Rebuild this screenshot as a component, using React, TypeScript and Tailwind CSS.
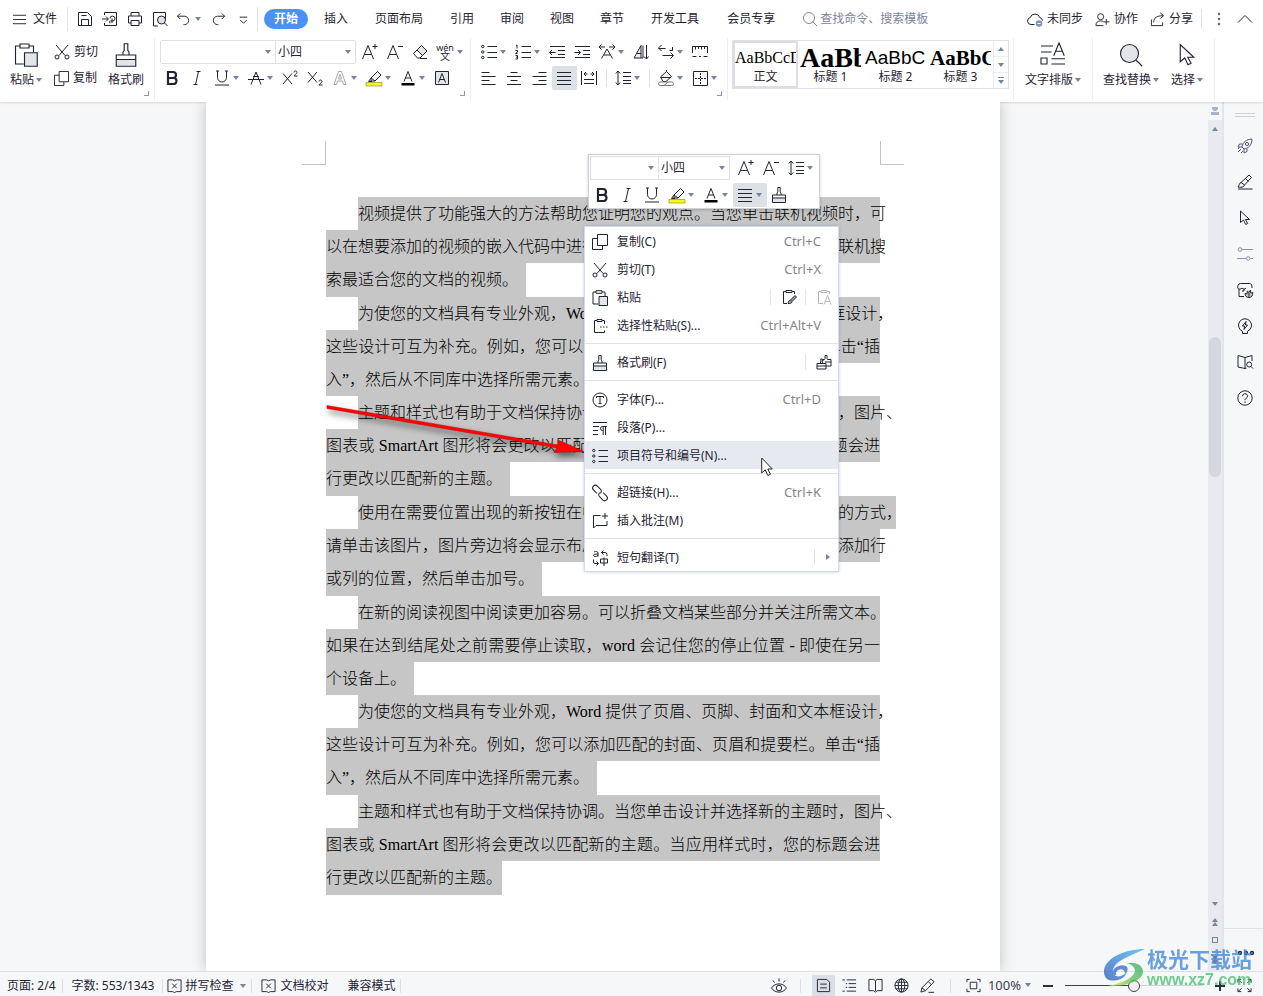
import { useState, type ReactNode } from "react";
import clsx from "clsx";

const tabs = ["插入", "页面布局", "引用", "审阅", "视图", "章节", "开发工具", "会员专享"];

type Line = { text: string; full?: boolean; indent?: boolean; hang?: boolean; last?: boolean };

const paragraphs: Line[][] = [
  [
    { text: "视频提供了功能强大的方法帮助您证明您的观点。当您单击联机视频时，可", full: true, indent: true },
    { text: "以在想要添加的视频的嵌入代码中进行粘贴。您也可以键入一个关键字以联机搜", full: true },
    { text: "索最适合您的文档的视频。" },
  ],
  [
    { text: "为使您的文档具有专业外观，Word 提供了页眉、页脚、封面和文本框设计，", full: true, indent: true },
    { text: "这些设计可互为补充。例如，您可以添加匹配的封面、页眉和提要栏。单击“插", full: true },
    { text: "入”，然后从不同库中选择所需元素。" },
  ],
  [
    { text: "主题和样式也有助于文档保持协调。当您单击设计并选择新的主题时，图片、", full: true, indent: true },
    { text: "图表或 SmartArt 图形将会更改以匹配新的主题。当应用样式时，您的标题会进", full: true },
    { text: "行更改以匹配新的主题。" },
  ],
  [
    { text: "使用在需要位置出现的新按钮在中保存时间。若要更改图片适应文档的方式，", full: true, indent: true, hang: true },
    { text: "请单击该图片，图片旁边将会显示布局选项按钮。当处理表格时，单击要添加行", full: true },
    { text: "或列的位置，然后单击加号。" },
  ],
  [
    { text: "在新的阅读视图中阅读更加容易。可以折叠文档某些部分并关注所需文本。", full: true, indent: true },
    { text: "如果在达到结尾处之前需要停止读取，word 会记住您的停止位置 - 即使在另一", full: true },
    { text: "个设备上。" },
  ],
  [
    { text: "为使您的文档具有专业外观，Word 提供了页眉、页脚、封面和文本框设计，", full: true, indent: true },
    { text: "这些设计可互为补充。例如，您可以添加匹配的封面、页眉和提要栏。单击“插", full: true },
    { text: "入”，然后从不同库中选择所需元素。" },
  ],
  [
    { text: "主题和样式也有助于文档保持协调。当您单击设计并选择新的主题时，图片、", full: true, indent: true },
    { text: "图表或 SmartArt 图形将会更改以匹配新的主题。当应用样式时，您的标题会进", full: true },
    { text: "行更改以匹配新的主题。", last: true },
  ],
];

const icons = {
  menu: <path d="M1 3.5h14M1 8h14M1 12.5h14" />,
  save: <path d="M1.500 1.500h9l4 4v9h-13zM4.500 14.500v-6h7v6M4.500 4.500h5" />,
  exportPdf: <path d="M2.500 4V1.500h12v13h-12V12M0 8h6M4 5.500 6.500 8 4 10.500M8.500 12c-1.500 0-1.500-2 0-2h1.500a2.500 2.500 0 1 0-2-2.500M10 7.500V12" />,
  print: <path d="M4 5V1.500h8V5M4 12H1.500V5h13v7H12M4 9.500h8v5H4z" />,
  preview: (
    <>
      <path d="M6 15H1.500V1.500h12V8" />
      <circle cx="9.500" cy="9" r="4" fill="#dfe2e6" />
      <path d="m12.500 12 3 3" />
    </>
  ),
  undo: <path d="M4.500 1.500 1.500 4.500l3 3M1.500 4.500h7.500a4.500 4.500 0 0 1 0 9H8" />,
  redo: <path d="m11.500 1.500 3 3-3 3M14.500 4.500H7a4.500 4.500 0 0 0 0 9h1" />,
  more: <path d="M4 5.500h8M4.500 8.500 8 12l3.500-3.500" />,
  scissors: (
    <>
      <path d="m2 1 9 10.500M14 1 5 11.500" />
      <circle cx="3" cy="13" r="2" />
      <circle cx="13" cy="13" r="2" />
    </>
  ),
  copy: <path d="M5.500.5h10v11h-10zM5.500 4.500h-5v11h10v-4" />,
  paste: (
    <>
      <path d="M4 2H1v12h5.500M10 2h3v4M4 .7h6V3.300H4z" />
      <path d="M7 6.500h8.500v9H7z" fill="#e2e4e8" />
    </>
  ),
  pasteSpecial: (
    <>
      <path d="M5 2.500H2.500v12h10v-2M10 2.500h2.500V6M5 1.500h5v2H5z" />
      <path d="M8 9h7.500" strokeDasharray="1.500 1.500" />
    </>
  ),
  pasteBrush: (
    <>
      <path d="M5 2.500H2.500v12H6M11 2.500h2.500V5M5 1.500h6v2H5z" />
      <path d="m14 6.500 1.500 1.500-4.500 4.500L9 11.500z" fill="#9aa0ac" />
      <path d="M9 11.500c-1.500 0-2 2-2 3 1.500.3 4 0 4-2" fill="#9aa0ac" />
    </>
  ),
  pasteText: <path d="M5 2.500H2.500v12H7M11 2.500h2.500V5M5 1.500h6v2H5zM8 15.500l3.500-9 3.500 9M9.500 12.500h4" />,
  brush: (
    <>
      <path d="M2 10.500h12V15H2z" fill="#e2e4e8" stroke="none" />
      <path d="M1.500 8h13v7.500h-13zM1.500 11h13M6 8V6l.8-1V.5h2.400V5l.8 1v2" />
    </>
  ),
  brushes: <path d="M1 9.500h9V15H1zM1 12h9M4 9.500 4.800 8V5h1.500v3l1 1.500M7 7V5.500h1.500l.5-1V1.500h2v3l.5 1H15V12h-5M9 8h6" />,
  growA: <path d="M.5 15 6 1.500 11.500 15M2.500 10.500h7M13 0v5M10.500 2.500h5" />,
  shrinkA: <path d="M.5 15 6 1.500 11.500 15M2.500 10.500h7M11 2.500h5" />,
  eraser: (
    <>
      <path d="m6 6.500 4.500-4.500 4.500 4.500-4.500 4.500z" fill="#e2e4e8" stroke="none" />
      <path d="m1.500 9.500 8-8 5.500 5.500-7 7H5.500zM5 6l5.500 5.500M8 14.500h7" />
    </>
  ),
  bold: <path d="M4 2h5a2.800 2.800 0 0 1 0 6H4zM4 8h5.500a3 3 0 0 1 0 6H4z" strokeWidth="2.200" />,
  italic: <path d="M7.500 1.500h4M4.500 14.500h4M9.500 1.500l-3 13" />,
  underline: <path d="M3.500 1v6.500a4.500 4.500 0 0 0 9 0V1M1 15h14M2 1h3M11 1h3" />,
  strike: <path d="M3 14.500 8 2l5 12.500M0 9.500h16M5 6.500h6" />,
  superscript: <path d="m1 3.500 9 10.500M10 3.500 1 14M12 2.500c0-2 3-2 3 0 0 1.200-3 2.500-3 3.500h3.500" />,
  subscript: <path d="m1 2 9 10.500M10 2 1 12.500M12 11.500c0-2 3-2 3 0 0 1.200-3 2.500-3 3.500h3.500" />,
  outlineA: <path d="M2 14.500 6.500 1.500h3l4.500 13h-2.500l-1-3.500h-5l-1 3.500zM6.300 9h3.400L8 4z" stroke="#a2a6ae" />,
  highlight: (
    <>
      <path d="M0 12.500h16v3.500H0z" fill="#ffff00" stroke="#8c8f40" strokeWidth="0.700" />
      <path d="m5 8 6.500-6.500L15 5l-6 6H5zM5 8l4 3M5 8l-2.500 3.500H6" fill="#f3f4f6" />
    </>
  ),
  fontColor: (
    <>
      <path d="M1.500 13h13v2.500h-13z" fill="#000" stroke="none" />
      <path d="M4 11.500 8 1.500l4 10M5.300 8h5.400" />
    </>
  ),
  boxA: (
    <>
      <path d="M1.500 1.500h13v13h-13z" fill="#e2e4e8" />
      <path d="M4.500 12.500 8 3.500l3.500 9M5.800 9.500h4.400" />
    </>
  ),
  bullets: (
    <>
      <circle cx="1.800" cy="2.500" r="1.200" />
      <circle cx="1.800" cy="8" r="1.200" />
      <circle cx="1.800" cy="13.500" r="1.200" />
      <path d="M6.500 2.500H16M6.500 8.500H16M6.500 13.500H16" />
    </>
  ),
  numbers: <path d="M1 1.500 2 1v3.500M.5 6.500h2V8l-2 1.500h2M.5 11.500h2V15h-2M1 13.200h1.500M6.500 2.500H16M6.500 8.500H16M6.500 13.500H16" />,
  outdent: <path d="M1 2.500h15M9 6.500h7M9 10.500h7M1 13.500h15M6.500 8.500H.5M3 6 .5 8.500 3 11" />,
  indent: <path d="M1 2.500h15M9 6.500h7M9 10.500h7M1 13.500h15M.5 8.500h6M4 6l2.500 2.500L4 11" />,
  charScale: <path d="M0 3h6M2.500.5 0 3l2.500 2.500M16 3h-6M13.500.5 16 3l-2.500 2.500M2.500 14.500 8 5l5.500 9.500M5 11h6" />,
  sortText: (
    <>
      <path d="M1 14 8 1.500V14z" fill="#eceef1" />
      <path d="M4 9.500h4M10 1.500V14H8M13.500 1v14M11 12.500l2.500 2.500 2-2.500" />
    </>
  ),
  wrap: <path d="M3.500 1 .5 4l3 3M.5 4.500h7M12.500 8.500l3 3-3 3M15 11.500H4.500M14.500 3v3.500h-3" />,
  ruler: <path d="M.5 9V2.500h15V9M3.500 2.500v3M6.500 2.500V5M9.500 2.500v3M12.500 2.500V5M.5 12.500h4M7 12.500h2M11.500 12.500h4" />,
  alignLeft: <path d="M.5 2.500h8M.5 6.500h14M.5 10.500h8M.5 14.500h14" />,
  alignCenter: <path d="M4.500 2.500h7M1 6.500h14M4.500 10.500h7M1 14.500h14" />,
  alignRight: <path d="M7.500 2.500h8M1.500 6.500h14M7.500 10.500h8M1.500 14.500h14" />,
  justify: <path d="M1 2.500h14M1 6.500h14M1 10.500h14M1 14.500h14" />,
  distribute: <path d="M.5 1v14M15.500 1v14M3 9.500h10M3 13.500h10M3 4h3.500M5 2 3 4l2 2M13 4H9.500M11 2l2 2-2 2" />,
  lineSpacing: <path d="M3 1v14M.8 3.500 3 1l2.200 2.500M.8 12.500 3 15l2.200-2.500M8 2.500h8M8 6.500h8M8 10.500h8M8 13.500h8" />,
  fill: (
    <>
      <path d="m2.500 7 6-5.500 5 5-5.500 5H5zM8.500 1.500V0" fill="#f3f4f6" />
      <path d="M3 7.500h10" />
      <rect x=".5" y="12" width="15" height="3.500" rx="1.700" stroke="#777" />
      <path d="m6 15.500 4-3.500" stroke="#e0503c" />
    </>
  ),
  borders: (
    <>
      <path d="M1.500 1.500h14v14h-14z" />
      <path d="M8.500 3v11M3 8.500h11" strokeDasharray="2 1" />
    </>
  ),
  typeset: <path d="M0 2h8M0 6h7M0 10h4v4H0zM7 10.500h9M7 14h9M8.500 8.500 12 0l3.500 8.500M10 5.500h4" />,
  search: (
    <>
      <circle cx="7" cy="7" r="5.500" />
      <path d="m11 11 4 4" />
    </>
  ),
  searchBig: (
    <>
      <circle cx="7" cy="7" r="6" fill="#e2e4e8" />
      <path d="m11.500 11.500 4 4" />
    </>
  ),
  cursor: <path d="M3.500 1v11.500l3-2.500 2.200 4.500 2-1L8.500 9.500h4z" />,
  cloud: (
    <>
      <path d="M7.500 13.500H4A3.500 3.500 0 0 1 3.200 6.600a5 5 0 0 1 9.600 0A3.500 3.500 0 0 1 15.500 9.500" />
      <circle cx="12" cy="12.500" r="3.300" fill="#8493b3" stroke="none" />
      <path d="M10.500 12.500h3" stroke="#fff" />
    </>
  ),
  invite: (
    <>
      <circle cx="6" cy="5" r="3.200" />
      <path d="M1 14.500c0-3.500 2-5 5-5 1.500 0 2.500.3 3.300 1M1 14.500h8M12 7.500v6M9.500 10.500h6" />
    </>
  ),
  share: <path d="M1.500 8v6.500h12V11M4 11c0-5 3-7 10-7M11 1l3.500 3L11 7" />,
  dots: (
    <g fill="#5b6270" stroke="none">
      <circle cx="8" cy="3" r="1.200" />
      <circle cx="8" cy="8" r="1.200" />
      <circle cx="8" cy="13" r="1.200" />
    </g>
  ),
  chevronUp: <path d="m1 11.500 7-7 7 7" />,
  fontT: (
    <>
      <circle cx="8" cy="8" r="7" />
      <path d="M4.500 6V4.500h7V6M8 4.500v7M6.500 11.500h3" />
    </>
  ),
  paragraph: <path d="M1 2.500h14M1 6.500h6M1 10.500h5M1 14.500h5M15 6.500h-4.500a2 2 0 0 0 0 4H11M11.200 6.500v8.500M13.500 6.500v8.500" />,
  link: (
    <g transform="rotate(45 8 8)">
      <path d="M6 10.500H1.200a2.700 2.700 0 0 1 0-5.500h4.600a2.700 2.700 0 0 1 2.600 3" />
      <path d="M10 5.500h4.800a2.700 2.700 0 0 1 0 5.500h-4.600a2.700 2.700 0 0 1-2.600-3" />
    </g>
  ),
  comment: <path d="M8.500 2.500h-7V15l2.500-2.500h11V8M13 0v6M10 3h6" />,
  translate: <path d="M2 2c2-1 4-.5 4 1v3.500M6 4C3 4 1.500 4.500 1.500 5.500s3 1.500 4.500 0M9.500 2.500H13a2 2 0 0 1 2 2V6M11.500.5l-2 2 2 2M1.500 9.500V12a1.500 1.500 0 0 0 1.500 1.500h3M4.500 11.500l2 2-2 2M8.500 9h7v4h-7zM12 7.500V16" />,
  rocket: (
    <g stroke="#4a5878">
      <path d="M5 9c1-5 4-7.500 10-8-.2 6-3 9-8 10zM5.500 6 2.500 6 1 9h4M10 10.500v3L7 15v-4M4 11l-3 3M2.500 9.500 1 11M6 13l-2 2" />
      <circle cx="10" cy="6" r="1.600" />
    </g>
  ),
  pen: <path d="M4 8.500 12 1l2.500 2.500L7.500 11zM4 8.500c-2 .5-1.500 3-3 4.500 2.500.5 6 .5 6.500-2M1 15h14.500M8.500 4.500l3 3" />,
  sliders: (
    <g stroke="#8a93a8">
      <circle cx="3" cy="3.500" r="1.800" />
      <path d="M5 3.500h11M0 12.500h9M13 12.500h3" />
      <circle cx="11.200" cy="12.500" r="1.800" />
    </g>
  ),
  shop: (
    <>
      <path d="M2 7v7.500h5M3.500 1.500h9C14.500 1.500 15 3 15 6M3.500 1.500C1 1.500.5 4.500.8 6c.5 1.500 3.200 1.500 4.200 0 1 1.500 3 1.500 4 0M6 10V8h2" />
      <path d="M12 15.500c-2.500 0-4-1.500-4-4l2 .5.3-3 1.700 1.500L13.500 8l.3 3 2-.5c0 3.500-1.300 5-3.800 5zM12 15V11" fill="#c5c9d2" />
    </>
  ),
  bulb: <path d="M5.500 15.500h5v-2.200a6.500 6.500 0 1 0-5 0zM9 3.500 5.500 8h2L7 11.500 10.500 7h-2z" />,
  bookSearch: (
    <>
      <path d="M8 3.500 1 1.500v11.500l7 1.500V3.500l7-2V7M8 14.500l1.500-.5" />
      <circle cx="12.200" cy="10.500" r="2.500" />
      <path d="m14 12.500 2 2" />
    </>
  ),
  help: (
    <>
      <circle cx="8" cy="8" r="7.200" />
      <path d="M5.500 6.200a2.500 2.500 0 1 1 3.600 2.200C8.200 8.900 8 9.300 8 10.200M8 11.500V13" />
    </>
  ),
  proof: <path d="M6 2H1v12.500h5l2 1 2-1h5V2h-5L8 3zM5.500 6l5 5M10.500 6l-5 5" />,
  eye: (
    <>
      <path d="M.5 10C4 4.500 12 4.500 15.500 10 12 15.500 4 15.500.5 10zM8 3.500V.5M3.500 4.500 2 2.500M12.500 4.500l1.500-2" />
      <circle cx="8" cy="10" r="2.700" />
    </>
  ),
  page: <path d="M1.500 1.500h10l3 3v10h-13zM4.500 6.500h7M4.500 10.500h7" />,
  outline: <path d="M.5 2H3M5 2h10M4 6h1.500M7 6h8M4 10h1.500M7 10h8M.5 14H3M5 14h10" />,
  book: <path d="M1 1.500h5l2 1.500 2-1.500h5v12h-5L8 15l-2-1.500H1zM8 3v11" />,
  globe: (
    <>
      <circle cx="8" cy="8" r="7" />
      <ellipse cx="8" cy="8" rx="3.500" ry="7" />
      <path d="M1 8h14M2 4.500h12M2 11.500h12M8 1v14" />
    </>
  ),
  pencil: <path d="m2 10.500 9.500-9.500L15 4l-9 9.500-5 1.500zM2 10.500l4 3M9 4l3.500 3.500M9 15.300h6" />,
  fit: <path d="M1 4.500V1.500h3M12 1.500h3v3M15 11.500v3h-3M4 14.500H1v-3M4.500 4.500h7v7h-7z" />,
  expand: <path d="M1 5V1.500h3.500M1 1.500 5 5M11.500 1.500H15V5M15 1.500 11 5M15 11v3.500h-3.500M15 14.500 11 11M4.500 14.500H1V11M1 14.500 5 11" />,
  ellipsis: (
    <g strokeWidth="1.500">
      <circle cx="2" cy="8" r="1.400" />
      <circle cx="8" cy="8" r="1.400" />
      <circle cx="14" cy="8" r="1.400" />
    </g>
  ),
};

type IconName = keyof typeof icons;

function Icon({ name, className = "size-4" }: { name: IconName; className?: string }) {
  return (
    <svg
      viewBox="0 0 16 16"
      fill="none"
      stroke="currentColor"
      strokeWidth="1"
      aria-hidden="true"
      className={clsx("shrink-0 overflow-visible", className)}
    >
      {icons[name]}
    </svg>
  );
}

function Caret({ className }: { className?: string }) {
  return (
    <svg viewBox="0 0 6 4" aria-hidden="true" className={clsx("w-[6px] h-1 shrink-0 fill-[#7784a0]", className)}>
      <path d="M0 0h6L3 4z" />
    </svg>
  );
}

function Tool({ name, label, caret, active }: { name: IconName; label: string; caret?: boolean; active?: boolean }) {
  return (
    <button
      type="button"
      aria-label={label}
      className={clsx(
        "h-6 flex items-center shrink-0 pl-1 rounded-xs",
        caret ? "w-[34px] gap-[3px]" : "w-[25px]",
        active && "bg-[#dce1e6]",
      )}
    >
      <Icon name={name} />
      {caret && <Caret />}
    </button>
  );
}

function Corner() {
  return <span className="absolute right-[5px] bottom-1 size-[5px] border-r border-b border-[#8c97b0]" />;
}

function Combo({ label, value, className }: { label: string; value: string; className: string }) {
  return (
    <span className={clsx("relative flex items-center", className)}>
      <select aria-label={label} defaultValue={value} className="appearance-none size-full pl-0.5 outline-none">
        <option value={value}>{value}</option>
      </select>
      <Caret className="absolute right-1" />
    </span>
  );
}

function TitleBar() {
  const quick: [IconName, string][] = [
    ["save", "保存"],
    ["exportPdf", "输出为PDF"],
    ["print", "打印"],
    ["preview", "打印预览"],
  ];
  return (
    <div className="h-[38px] flex items-center whitespace-nowrap">
      <button type="button" className="flex items-center gap-1.5 pl-3">
        <Icon name="menu" className="size-[15px]" />
        文件
      </button>
      <span className="w-px h-6 ml-2.5 mr-1 bg-[#e1e3e8]" />
      {quick.map(([name, label]) => (
        <button key={name} type="button" aria-label={label} className="w-[25px] flex justify-center">
          <Icon name={name} />
        </button>
      ))}
      <button type="button" aria-label="撤消" className="flex items-center gap-1 ml-1">
        <Icon name="undo" className="size-[15px]" />
        <Caret />
      </button>
      <button type="button" aria-label="恢复" className="ml-2.5">
        <Icon name="redo" className="size-[15px]" />
      </button>
      <button type="button" aria-label="更多" className="ml-2.5">
        <Icon name="more" className="size-[15px]" />
      </button>
      <span className="w-px h-6 ml-1.5 mr-1.5 bg-[#e1e3e8]" />
      <button type="button" className="h-5 w-11 mr-[3px] rounded-full bg-[#4991f2] text-white font-bold shrink-0">
        开始
      </button>
      {tabs.map((tab) => (
        <button key={tab} type="button" className={clsx(tab.length > 2 ? "px-[14px]" : "px-[13px]")}>
          {tab}
        </button>
      ))}
      <label className="flex items-center gap-0.5 ml-[13px] text-[#7b869f]">
        <Icon name="search" />
        <input
          type="text"
          aria-label="查找命令、搜索模板"
          placeholder="查找命令、搜索模板"
          className="w-[112px] outline-none placeholder:text-[#7b869f] placeholder:opacity-100"
        />
      </label>
      <div className="flex items-center gap-3 ml-auto pr-[10px]">
        <button type="button" className="flex items-center gap-1">
          <Icon name="cloud" />
          未同步
        </button>
        <button type="button" className="flex items-center gap-1">
          <Icon name="invite" className="size-[15px]" />
          协作
        </button>
        <button type="button" className="flex items-center gap-1">
          <Icon name="share" className="size-[15px]" />
          分享
        </button>
        <span className="w-px h-5 -ml-1 bg-[#e1e3e8]" />
        <button type="button" aria-label="更多选项" className="-ml-[3px]">
          <Icon name="dots" />
        </button>
        <button type="button" aria-label="收起功能区" className="-ml-0.5">
          <Icon name="chevronUp" />
        </button>
      </div>
    </div>
  );
}

function BigButton({ name, label, caret, className }: { name: IconName; label: string; caret?: boolean; className?: string }) {
  return (
    <button type="button" className={clsx("flex flex-col items-center gap-[5px] pt-[5px] shrink-0", className)}>
      <Icon name={name} className="size-6 [stroke-width:0.75]" />
      <span className="flex items-center gap-0.5 leading-4">
        {label}
        {caret && <Caret />}
      </span>
    </button>
  );
}

function Ribbon() {
  const styles = [
    { name: "正文", sample: "AaBbCcD", look: "font-['Liberation_Serif'] text-base" },
    { name: "标题 1", sample: "AaBb", look: "font-['Liberation_Serif'] font-bold text-[28px]" },
    { name: "标题 2", sample: "AaBbC", look: "font-['Liberation_Sans'] text-[19px]" },
    { name: "标题 3", sample: "AaBbC", look: "font-['Liberation_Serif'] font-bold text-[21px]" },
  ];
  const [current, setCurrent] = useState("正文");

  return (
    <div className="h-16 flex whitespace-nowrap pb-0.5">
      <div className="relative flex w-[155px] shrink-0 border-r border-[#eceef1] pl-2.5 items-start">
        <BigButton name="paste" label="粘贴" caret />
        <div className="flex flex-col gap-0.5 ml-3 pt-0.5">
          <button type="button" className="h-6 flex items-center gap-1">
            <Icon name="scissors" />
            剪切
          </button>
          <button type="button" className="h-6 flex items-center gap-1">
            <Icon name="copy" className="size-[15px]" />
            复制
          </button>
        </div>
        <BigButton name="brush" label="格式刷" className="ml-2.5" />
        <Corner />
      </div>

      <div className="relative w-[316px] shrink-0 border-r border-[#eceef1] pl-[5px] pt-0.5">
        <div className="flex items-center h-6">
          <div className="flex h-6 w-[196px] mr-[2px] border border-[#dfe1e6] rounded-xs">
            <Combo label="字体" value="" className="w-[115px] border-r border-[#dfe1e6]" />
            <Combo label="字号" value="小四" className="flex-1" />
          </div>
          <Tool name="growA" label="增大字号" />
          <Tool name="shrinkA" label="减小字号" />
          <Tool name="eraser" label="清除格式" />
          <button type="button" aria-label="拼音指南" className="h-6 w-[34px] flex items-center gap-1 pl-1">
            <span className="w-4 flex flex-col items-center">
              <span className="text-[9px] leading-[7px]">wén</span>
              <span className="text-[10px] leading-[10px]">文</span>
            </span>
            <Caret />
          </button>
        </div>
        <div className="flex items-center mt-0.5">
          <Tool name="bold" label="加粗" />
          <Tool name="italic" label="倾斜" />
          <Tool name="underline" label="下划线" caret />
          <Tool name="strike" label="删除线" caret />
          <Tool name="superscript" label="上标" />
          <Tool name="subscript" label="下标" />
          <Tool name="outlineA" label="文字效果" caret />
          <Tool name="highlight" label="突出显示" caret />
          <Tool name="fontColor" label="字体颜色" caret />
          <Tool name="boxA" label="字符底纹" />
        </div>
        <Corner />
      </div>

      <div className="relative w-[257px] shrink-0 border-r border-[#eceef1] pl-1.5 pt-0.5">
        <div className="flex items-center">
          <Tool name="bullets" label="项目符号" caret />
          <Tool name="numbers" label="编号" caret />
          <Tool name="outdent" label="减少缩进量" />
          <Tool name="indent" label="增加缩进量" />
          <Tool name="charScale" label="中文版式" caret />
          <Tool name="sortText" label="排序" />
          <Tool name="wrap" label="显示编辑标记" caret />
          <Tool name="ruler" label="制表位" />
        </div>
        <div className="flex items-center mt-0.5">
          <Tool name="alignLeft" label="左对齐" />
          <Tool name="alignCenter" label="居中" />
          <Tool name="alignRight" label="右对齐" />
          <Tool name="justify" label="两端对齐" active />
          <Tool name="distribute" label="分散对齐" />
          <span className="w-px h-[18px] mx-1 bg-[#e1e3e8]" />
          <Tool name="lineSpacing" label="行距" caret />
          <span className="w-px h-[18px] mx-1 bg-[#e1e3e8]" />
          <Tool name="fill" label="底纹颜色" caret />
          <Tool name="borders" label="边框" caret />
        </div>
        <Corner />
      </div>

      <div className="shrink-0 border-r border-[#eceef1] px-1 pt-0.5">
        <div className="flex h-[49px] border border-[#dfe1e6]">
          {styles.map((s) => (
            <button
              key={s.name}
              type="button"
              onClick={() => setCurrent(s.name)}
              className={clsx(
                "w-[65px] h-full flex flex-col border-2 overflow-hidden text-black",
                current === s.name ? "border-[#dcdee4]" : "border-transparent",
              )}
            >
              <span className={clsx("h-[29px] leading-[30px] w-full overflow-hidden text-left", s.look)}>{s.sample}</span>
              <span className="w-full text-center leading-[18px] text-[#1f2433]">{s.name}</span>
            </button>
          ))}
          <div className="w-[15px] flex flex-col border-l border-[#eceef1] divide-y divide-[#eceef1]">
            <button type="button" aria-label="上一行" className="flex-1 flex items-center justify-center">
              <Caret className="rotate-180" />
            </button>
            <button type="button" aria-label="下一行" className="flex-1 flex items-center justify-center">
              <Caret />
            </button>
            <button type="button" aria-label="更多样式" className="flex-1 flex flex-col gap-0.5 items-center justify-center">
              <span className="w-[6px] h-px bg-[#7784a0]" />
              <Caret />
            </button>
          </div>
        </div>
      </div>

      <div className="w-[79px] shrink-0 flex justify-center items-start border-r border-[#eceef1]">
        <BigButton name="typeset" label="文字排版" caret />
      </div>
      <div className="w-[122px] shrink-0 flex items-start gap-3 pl-2.5 border-r border-[#eceef1]">
        <BigButton name="searchBig" label="查找替换" caret />
        <BigButton name="cursor" label="选择" caret />
      </div>
    </div>
  );
}

function MiniToolbar() {
  return (
    <div className="absolute left-[382px] top-[52px] w-[232px] p-px bg-white border border-[#cfd2d8] shadow-[0_1px_3px_rgba(0,0,0,0.2)]">
      <div className="flex items-center">
        <div className="flex h-6 w-[142px] mr-1 border border-[#dfe1e6]">
          <Combo label="字体" value="" className="w-[68px] border-r border-[#dfe1e6]" />
          <Combo label="字号" value="小四" className="flex-1" />
        </div>
        <Tool name="growA" label="增大字号" />
        <Tool name="shrinkA" label="减小字号" />
        <Tool name="lineSpacing" label="行距" caret />
      </div>
      <div className="flex items-center mt-[3px]">
        <Tool name="bold" label="加粗" />
        <Tool name="italic" label="倾斜" />
        <Tool name="underline" label="下划线" />
        <Tool name="highlight" label="突出显示" caret />
        <Tool name="fontColor" label="字体颜色" caret />
        <Tool name="justify" label="对齐方式" caret active />
        <Tool name="brush" label="格式刷" />
      </div>
    </div>
  );
}

type MenuRowProps = { icon: IconName; label: string; keys?: string; active?: boolean; children?: ReactNode };

function MenuRow({ icon, label, keys, active, children }: MenuRowProps) {
  return (
    <div className={clsx("h-7 flex items-center pl-[7px]", active && "bg-[#e6eaf0]")}>
      <button type="button" role="menuitem" className="flex-1 h-full pt-px flex items-center gap-[9px] text-left">
        <Icon name={icon} />
        {label}
        {keys && <span className="ml-auto pr-[17px] text-[13px] text-[#868686]">{keys}</span>}
      </button>
      {children}
    </div>
  );
}

function ContextMenu() {
  const rule = <hr className="my-1 border-[#e1e3e8]" />;
  return (
    <div
      role="menu"
      className="absolute left-[378px] top-[124px] w-[255px] bg-white border border-[#d5dbe8] shadow-[0_0_3px_rgba(90,110,160,0.35)]"
    >
      <MenuRow icon="copy" label="复制(C)" keys="Ctrl+C" />
      <MenuRow icon="scissors" label="剪切(T)" keys="Ctrl+X" />
      <MenuRow icon="paste" label="粘贴">
        <button type="button" aria-label="保留源格式粘贴" className="border-l border-[#e1e3e8] pl-2.5 pr-2">
          <Icon name="pasteBrush" />
        </button>
        <button type="button" aria-label="只粘贴文本" className="border-l border-[#e1e3e8] pl-2.5 pr-[6px] text-[#b4b6ba]">
          <Icon name="pasteText" />
        </button>
      </MenuRow>
      <MenuRow icon="pasteSpecial" label="选择性粘贴(S)..." keys="Ctrl+Alt+V" />
      {rule}
      <MenuRow icon="brush" label="格式刷(F)">
        <button type="button" aria-label="连续格式刷" className="border-l border-[#e1e3e8] pl-2.5 pr-[6px]">
          <Icon name="brushes" />
        </button>
      </MenuRow>
      {rule}
      <MenuRow icon="fontT" label="字体(F)..." keys="Ctrl+D" />
      <MenuRow icon="paragraph" label="段落(P)..." />
      <MenuRow icon="bullets" label="项目符号和编号(N)..." active />
      {rule}
      <MenuRow icon="link" label="超链接(H)..." keys="Ctrl+K" />
      <MenuRow icon="comment" label="插入批注(M)" />
      {rule}
      <MenuRow icon="translate" label="短句翻译(T)">
        <span className="h-4 border-l border-[#e1e3e8] pl-2.5 pr-[7px] flex items-center">
          <Caret className="-rotate-90" />
        </span>
      </MenuRow>
    </div>
  );
}

function Page() {
  return (
    <article className="relative w-[794px] max-w-full h-full mx-auto bg-white shadow-[0_0_14px_rgba(0,0,0,0.22)] pt-[39px]">
      <div className="flex justify-between w-[602px] mx-auto mb-8">
        <span className="size-6 border-r border-b border-[#c3c3c3]" />
        <span className="size-6 border-l border-b border-[#c3c3c3]" />
      </div>
      <div className="w-[554px] mx-auto font-['Liberation_Serif','Noto_Sans_CJK_SC',serif] font-light text-base leading-[33px] text-black whitespace-nowrap">
        {paragraphs.map((lines, i) => (
          <p key={i} >
            {lines.map((line, j) => (
              <span
                key={j}
                className={clsx(
                  "block bg-[#c6c6c6]",
                  line.indent && "ml-8",
                  line.hang && "-mr-4",
                  line.full ? "[text-align-last:justify]" : "w-fit",
                  !line.full && i % 3 !== 1 && "pb-px",
                  !line.full && !line.last && "pr-2",
                )}
              >
                {line.text}
              </span>
            ))}
          </p>
        ))}
      </div>

      <svg
        viewBox="0 0 260 60"
        aria-hidden="true"
        className="absolute left-[120px] top-[300px] w-[260px] h-[60px] fill-[#fb0505] drop-shadow-[2px_4px_3px_rgba(0,0,0,0.55)]"
      >
        <path d="M1 3.500 232 43V38l26 11.500-30 1 3-4.500L1 6.500z" stroke="#c00000" strokeWidth="0.500" />
      </svg>

      <MiniToolbar />
      <ContextMenu />
      <svg
        viewBox="0 0 12 20"
        aria-hidden="true"
        className="absolute left-[555px] top-[355px] w-3 h-5 fill-white stroke-[#222]"
      >
        <path d="M.7 1v15l3.500-3.200 2.600 5.700 2.600-1.200-2.600-5.300h4.500z" />
      </svg>
    </article>
  );
}

function ScrollBar() {
  return (
    <div className="w-[14px] shrink-0 flex flex-col items-center bg-[#e8eaf0]">
      <button type="button" aria-label="标尺" className="w-full h-[18px] bg-[#f6f7f9] flex items-center justify-center">
        <svg viewBox="0 0 8 8" aria-hidden="true" className="size-2 fill-[#a9b2c6]">
          <path d="M1 0h6v2L5 4H3L1 2zM0 5h8v3H0z" />
        </svg>
      </button>
      <button type="button" aria-label="向上滚动" className="h-[18px]">
        <Caret className="rotate-180" />
      </button>
      <span className="grow-[20]" />
      <span className="grow-[14] w-3 rounded-full bg-[#d4d7df]" />
      <span className="grow-[42]" />
      <button type="button" aria-label="向下滚动" className="h-[18px] flex items-center">
        <Caret />
      </button>
      <button type="button" aria-label="上一页" className="h-[18px] flex flex-col items-center justify-center">
        <Caret className="rotate-180" />
        <Caret className="rotate-180" />
      </button>
      <button type="button" aria-label="选择浏览对象" className="h-[18px] flex items-center">
        <span className="size-[6px] border border-[#7784a0]" />
      </button>
      <button type="button" aria-label="下一页" className="h-[22px] flex flex-col items-center justify-center">
        <Caret />
        <Caret />
      </button>
    </div>
  );
}

function SideBar() {
  const items: [IconName, string][] = [
    ["rocket", "快捷"],
    ["pen", "样式"],
    ["cursor", "选择窗格"],
    ["sliders", "属性"],
    ["shop", "素材"],
    ["bulb", "助手"],
    ["bookSearch", "查找"],
    ["help", "帮助"],
  ];
  return (
    <aside className="w-[41px] shrink-0 flex flex-col items-center border-l-2 border-[#e3e5ec] pl-0.5">
      <span className="w-5 h-1 mt-[11px] mb-[11px] border-y border-[#cfd1d6]" />
      {items.map(([name, label]) => (
        <button key={name} type="button" aria-label={label} className="h-9 shrink-0 flex items-center">
          <Icon name={name} />
        </button>
      ))}
      <div className="mt-auto self-stretch -ml-0.5 border-t border-[#dfe1e7] h-[43px] flex justify-center pl-1 pt-4">
        <button type="button" aria-label="更多" className="h-4">
          <Icon name="ellipsis" />
        </button>
      </div>
    </aside>
  );
}

function Divider({ className }: { className?: string }) {
  return <span className={clsx("w-px h-[14px] bg-[#dcdee4] shrink-0", className)} />;
}

function StatusBar() {
  const views: [IconName, string][] = [
    ["page", "页面视图"],
    ["outline", "大纲"],
    ["book", "阅读版式"],
    ["globe", "Web版式"],
    ["pencil", "写作模式"],
  ];
  return (
    <footer className="h-[25px] shrink-0 flex items-center border-t border-[#dfe1e7] pl-[7px] pr-[11px] pt-[3px] whitespace-nowrap">
      <span>页面: 2/4</span>
      <Divider className="ml-1.5 mr-[9px]" />
      <span>字数: 553/1343</span>
      <Divider className="ml-2 mr-1" />
      <button type="button" className="flex items-center gap-[3px]">
        <Icon name="proof" className="size-[15px]" />
        拼写检查
        <Caret className="ml-1" />
      </button>
      <Divider className="ml-[5px] mr-[9px]" />
      <button type="button" className="flex items-center gap-1">
        <Icon name="proof" className="size-[15px]" />
        文档校对
      </button>
      <button type="button" className="ml-[19px]">兼容模式</button>
      <Divider className="ml-[5px]" />

      <div className="flex items-center ml-auto">
        <button type="button" aria-label="护眼模式">
          <Icon name="eye" />
        </button>
        <Divider className="ml-[13px] mr-[11px]" />
        {views.map(([name, label], i) => (
          <button
            key={name}
            type="button"
            aria-label={label}
            className={clsx("h-[22px] w-[23px] mr-[3px] flex items-center justify-center", i === 0 && "bg-[#d9dfe5]")}
          >
            <Icon name={name} className="size-[15px]" />
          </button>
        ))}
        <Divider className="ml-2 mr-[15px]" />
        <button type="button" aria-label="最佳显示比例">
          <Icon name="fit" className="size-[15px]" />
        </button>
        <button type="button" className="flex items-center gap-1 ml-[7px] text-[#3b4254]">
          <span className="text-[13px]">100%</span>
          <Caret />
        </button>
        <button type="button" aria-label="缩小" className="ml-3 w-2.5 h-0.5 bg-[#2a3040]" />
        <input
          type="range"
          aria-label="显示比例"
          defaultValue={50}
          className="appearance-none w-[138px] h-3 ml-3 bg-[linear-gradient(90deg,#3a4058_50%,#cfd2d8_50%)] bg-[length:100%_1px] bg-center bg-no-repeat [&::-webkit-slider-thumb]:appearance-none [&::-webkit-slider-thumb]:size-3 [&::-webkit-slider-thumb]:rounded-full [&::-webkit-slider-thumb]:border [&::-webkit-slider-thumb]:border-[#444] [&::-webkit-slider-thumb]:bg-[#f1f1f1]"
        />
        <button type="button" aria-label="放大" className="ml-3">
          <svg viewBox="0 0 10 10" aria-hidden="true" className="size-2.5 stroke-[#2a3040] stroke-2">
            <path d="M5 0v10M0 5h10" />
          </svg>
        </button>
        <button type="button" aria-label="全屏显示" className="ml-3">
          <Icon name="expand" className="size-[15px]" />
        </button>
      </div>
    </footer>
  );
}

function SiteMark() {
  return (
    <div className="absolute right-[11px] bottom-[7px] flex items-end gap-0.5 opacity-75 pointer-events-none whitespace-nowrap">
      <svg viewBox="0 0 44 42" aria-hidden="true" className="w-[42px] h-[42px]">
        <defs>
          <linearGradient id="swooshTop" x1="0" y1="1" x2="1" y2="0">
            <stop offset="0" stopColor="#2857b8" />
            <stop offset="1" stopColor="#3fb8f0" />
          </linearGradient>
          <linearGradient id="swooshBottom" x1="0" y1="1" x2="1" y2="0">
            <stop offset="0" stopColor="#e8ea3c" />
            <stop offset="0.500" stopColor="#58bf5a" />
            <stop offset="1" stopColor="#2faa62" />
          </linearGradient>
        </defs>
        <path d="M44 1C22 1 1 11 1 25c0 5 3 9 8 9 8 1 15-3 16-9-3 4-8 6-12 4-6-4-1-12 6-16C25 9 33 6 44 1z" fill="url(#swooshTop)" />
        <path d="M10 26c0-5 8-10 14-7 3 2 2 6-1 8 0-4-3-6-7-4-2 1-3 3-2 5-2 1-4 0-4-2z" fill="#2f6cc4" />
        <path d="M25 16c7-2 16 1 17 8C43 34 25 41 4 40c12-2 26-7 29-14 2-5-3-9-8-10z" fill="url(#swooshBottom)" />
      </svg>
      <div className="flex flex-col">
        <span className="text-[21px] leading-[24px] font-bold text-[#3c83d2]">极光下载站</span>
        <span className="text-base leading-[18px] font-['Liberation_Sans'] font-bold text-[#42bd6c]">www.xz7.com</span>
      </div>
    </div>
  );
}

export default function App() {
  return (
    <div className="relative h-screen flex flex-col overflow-hidden bg-[#f6f7f9] font-['Noto_Sans','Noto_Sans_CJK_SC',sans-serif] text-xs text-[#1f2433]">
      <header className="relative shrink-0 bg-white shadow-[0_1px_2px_rgba(0,0,0,0.12)]">
        <TitleBar />
        <Ribbon />
      </header>
      <main className="flex-1 min-h-0 flex">
        <div className="flex-1 min-w-0 overflow-hidden pr-0.5">
          <Page />
        </div>
        <ScrollBar />
        <SideBar />
      </main>
      <StatusBar />
      <SiteMark />
    </div>
  );
}
